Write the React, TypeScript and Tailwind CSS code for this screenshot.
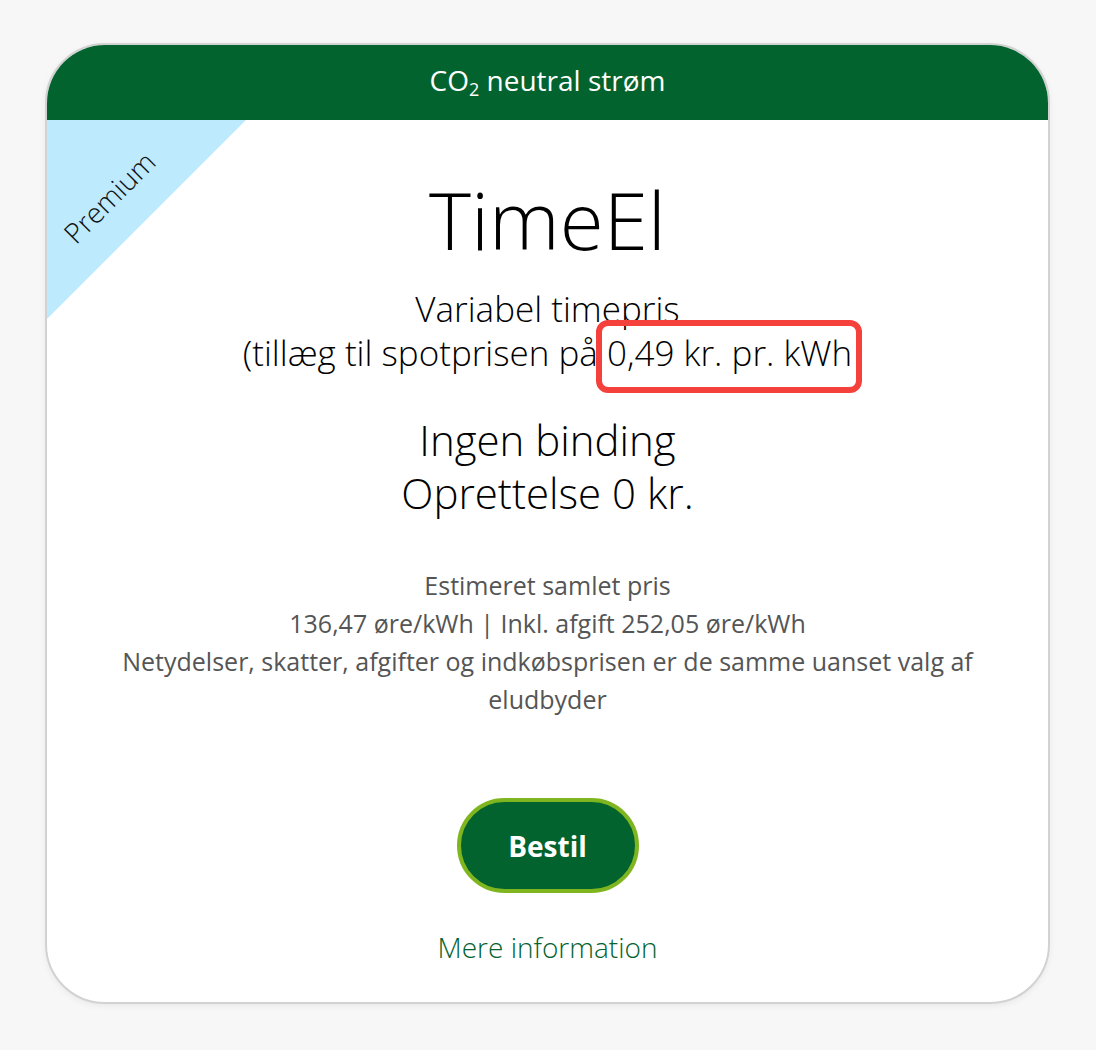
import React from "react";

export default function App() {
  return (
    <div
      className="min-h-[1050px] w-full bg-[#f7f7f7] pt-[43px] pl-[45px]"
      style={{ fontFamily: '"Open Sans", "Noto Sans", sans-serif' }}
    >
      <div className="relative flex h-[961px] w-[1005px] flex-col overflow-hidden rounded-[60px] border-2 border-[#d2d2d2] bg-white shadow-[0_2px_6px_rgba(0,0,0,0.06)]">
        <div className="flex h-[75px] shrink-0 items-center justify-center bg-[#03632e] pt-[3px] text-[28px] text-white [font-weight:500]">
          <span className="leading-[36px]">
            CO<span className="text-[18px] align-[-5px]">2</span> neutral strøm
          </span>
        </div>
        <div className="relative flex flex-1 flex-col items-center">
          <div className="absolute left-0 top-0 h-[200px] w-[200px] overflow-hidden">
            <div className="absolute left-0 top-0 h-0 w-0 border-r-[199px] border-t-[199px] border-r-transparent border-t-[#bdeafd]" />
            <div className="absolute left-[-8px] top-[63px] w-[140px] -rotate-45 text-center text-[28px] font-light leading-[28px] text-[#111]">
              Premium
            </div>
          </div>
          <div className="mt-[51px] text-[80px] font-light leading-[96px] text-black">TimeEl</div>
          <div className="mt-[20px] text-center text-[35px] font-light leading-[44px] text-black">
            <div>Variabel timepris</div>
            <div>
              (tillæg til spotprisen på{" "}
              <span className="relative">
                0,49 kr. pr. kWh
                <span className="absolute -left-[11px] -right-[10px] -top-[9px] -bottom-[17px] rounded-[12px] border-[6px] border-[#f5413b]" />
              </span>
            </div>
          </div>
          <div className="mt-[38px] text-center text-[42px] font-light leading-[53px] text-black">
            <div>Ingen binding</div>
            <div>Oprettelse 0 kr.</div>
          </div>
          <div className="mt-[47px] w-[900px] text-center text-[25px] leading-[38px] text-[#555]">
            <div>Estimeret samlet pris</div>
            <div>136,47 øre/kWh | Inkl. afgift 252,05 øre/kWh</div>
            <div>Netydelser, skatter, afgifter og indkøbsprisen er de samme uanset valg af eludbyder</div>
          </div>
          <button className="mt-[80px] flex h-[95px] w-[182px] items-center justify-center rounded-full border-[4px] border-[#7fb51e] bg-[#03632e] text-[28px] font-bold text-white">
            Bestil
          </button>
          <div className="mt-[36px] text-[28px] font-light leading-[36px] text-[#03632e]">Mere information</div>
        </div>
      </div>
    </div>
  );
}
